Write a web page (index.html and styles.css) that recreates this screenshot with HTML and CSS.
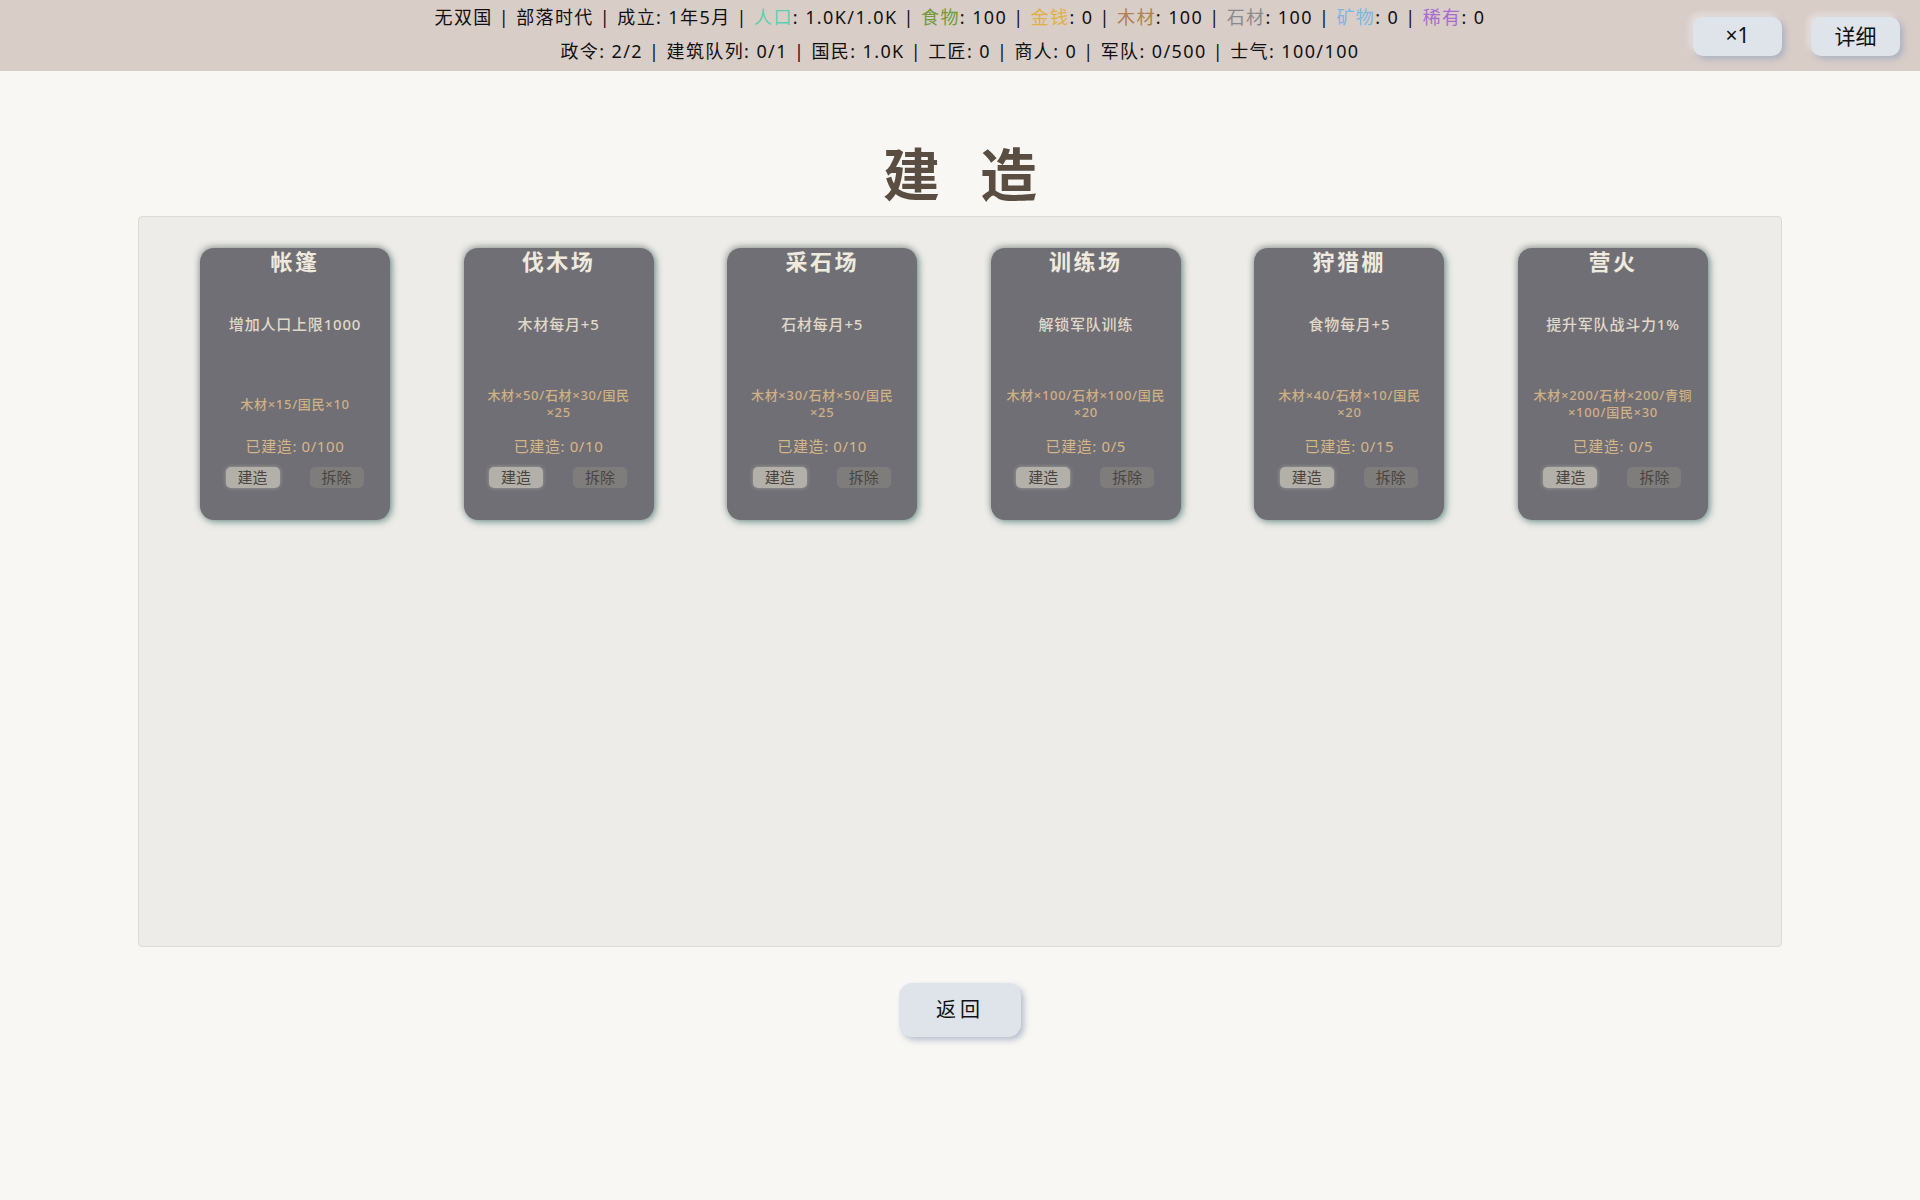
FILE: index.html
```html
<!DOCTYPE html>
<html lang="zh-CN">
<head>
    <meta charset="UTF-8">
    <title>建造</title>
    <link rel="stylesheet" href="styles.css">
</head>
<body>
    <div class="top-bar">
        <div class="status-line">无双国 | 部落时代 | 成立: 1年5月 | <span class="res-people">人口</span>: 1.0K/1.0K | <span class="res-food">食物</span>: 100 | <span class="res-gold">金钱</span>: 0 | <span class="res-wood">木材</span>: 100 | <span class="res-stone">石材</span>: 100 | <span class="res-ore">矿物</span>: 0 | <span class="res-rare">稀有</span>: 0</div>
        <div class="status-line">政令: 2/2 | 建筑队列: 0/1 | 国民: 1.0K | 工匠: 0 | 商人: 0 | 军队: 0/500 | 士气: 100/100</div>
        <div class="top-actions">
            <button class="soft-btn top-btn">×1</button>
            <button class="soft-btn top-btn">详细</button>
        </div>
    </div>

    <h1 class="page-title">建造</h1>

    <div class="build-panel">
        <div class="card">
            <div class="card-title">帐篷</div>
            <div class="card-desc">增加人口上限1000</div>
            <div class="card-cost">木材×15/国民×10</div>
            <div class="card-built">已建造: 0/100</div>
            <div class="card-actions">
                <button class="card-btn">建造</button>
                <button class="card-btn card-btn-off">拆除</button>
            </div>
        </div>
        <div class="card">
            <div class="card-title">伐木场</div>
            <div class="card-desc">木材每月+5</div>
            <div class="card-cost">木材×50/石材×30/国民×25</div>
            <div class="card-built">已建造: 0/10</div>
            <div class="card-actions">
                <button class="card-btn">建造</button>
                <button class="card-btn card-btn-off">拆除</button>
            </div>
        </div>
        <div class="card">
            <div class="card-title">采石场</div>
            <div class="card-desc">石材每月+5</div>
            <div class="card-cost">木材×30/石材×50/国民×25</div>
            <div class="card-built">已建造: 0/10</div>
            <div class="card-actions">
                <button class="card-btn">建造</button>
                <button class="card-btn card-btn-off">拆除</button>
            </div>
        </div>
        <div class="card">
            <div class="card-title">训练场</div>
            <div class="card-desc">解锁军队训练</div>
            <div class="card-cost">木材×100/石材×100/国民×20</div>
            <div class="card-built">已建造: 0/5</div>
            <div class="card-actions">
                <button class="card-btn">建造</button>
                <button class="card-btn card-btn-off">拆除</button>
            </div>
        </div>
        <div class="card">
            <div class="card-title">狩猎棚</div>
            <div class="card-desc">食物每月+5</div>
            <div class="card-cost">木材×40/石材×10/国民×20</div>
            <div class="card-built">已建造: 0/15</div>
            <div class="card-actions">
                <button class="card-btn">建造</button>
                <button class="card-btn card-btn-off">拆除</button>
            </div>
        </div>
        <div class="card">
            <div class="card-title">营火</div>
            <div class="card-desc">提升军队战斗力1%</div>
            <div class="card-cost">木材×200/石材×200/青铜×100/国民×30</div>
            <div class="card-built">已建造: 0/5</div>
            <div class="card-actions">
                <button class="card-btn">建造</button>
                <button class="card-btn card-btn-off">拆除</button>
            </div>
        </div>
    </div>

    <div class="footer">
        <button class="soft-btn back-btn">返回</button>
    </div>
</body>
</html>
```

FILE: styles.css
```css
body {
    margin: 0;
    min-height: 1200px;
    font-family: "Noto Sans", "Noto Sans CJK SC", sans-serif;
    background-color: #f8f7f3;
    color: #111;
}

button {
    font-family: inherit;
    border: none;
    padding: 0;
}

/* Top status bar */
.top-bar {
    position: relative;
    height: 71px;
    padding-top: 2px;
    box-sizing: border-box;
    background-color: #d9cdc8;
    text-align: center;
    font-size: 18px;
    letter-spacing: 1.4px;
}

.status-line {
    height: 33.5px;
    line-height: 31px;
}

.res-people { color: #5fcfb0; }
.res-food { color: #6f9a3a; }
.res-gold { color: #e0b040; }
.res-wood { color: #b08050; }
.res-stone { color: #8a8a8a; }
.res-ore { color: #7ab8e0; }
.res-rare { color: #a86ad0; }

.top-actions {
    position: absolute;
    top: 17px;
    right: 20px;
    display: flex;
    gap: 29px;
}

/* Soft raised buttons */
.soft-btn {
    background-color: #dfe3ea;
    color: #111;
    box-shadow: 3px 3px 6px rgba(150, 165, 190, 0.7), -3px -3px 6px rgba(255, 255, 255, 0.45);
}

.top-btn {
    width: 89px;
    height: 39px;
    padding-bottom: 3px;
    border-radius: 10px;
    font-size: 21px;
}

.page-title {
    margin: 0;
    height: 145px;
    box-sizing: border-box;
    padding: 58px 0 0 40px;
    text-align: center;
    font-size: 57px;
    line-height: 90px;
    font-weight: 700;
    letter-spacing: 40px;
    color: #5a4d41;
}

/* Panel with the building cards */
.build-panel {
    display: flex;
    align-items: flex-start;
    gap: 73.6px;
    width: 1644px;
    height: 731px;
    box-sizing: border-box;
    margin: 0 auto;
    padding: 31px 0 0 61px;
    background-color: #edece8;
    border: 1px solid #dcdbd6;
    border-radius: 4px;
}

.card {
    flex: none;
    display: flex;
    flex-direction: column;
    width: 190px;
    height: 272px;
    box-sizing: border-box;
    background-color: #6f6f75;
    border-radius: 14px;
    text-align: center;
    box-shadow: 2px 2px 7px rgba(80, 125, 120, 0.7), -1px -2px 6px rgba(90, 90, 90, 0.4);
}

.card-title {
    height: 26px;
    line-height: 26px;
    font-size: 22px;
    font-weight: 700;
    letter-spacing: 2.5px;
    color: #f0eade;
}

.card-desc {
    height: 100px;
    line-height: 100px;
    font-size: 15px;
    font-weight: 500;
    letter-spacing: 0.8px;
    color: #e0d8c8;
}

.card-cost {
    display: flex;
    align-items: center;
    justify-content: center;
    height: 60px;
    padding: 0 12px;
    font-size: 13px;
    font-weight: 500;
    line-height: 17px;
    letter-spacing: 0.7px;
    color: #d0b085;
}

.card-built {
    height: 24px;
    line-height: 24px;
    font-size: 15px;
    letter-spacing: 0.6px;
    color: #d6b688;
}

.card-actions {
    display: flex;
    justify-content: center;
    gap: 30px;
    margin-top: 9px;
    padding-right: 1px;
}

.card-btn {
    width: 54px;
    height: 21px;
    border-radius: 5px;
    background-color: #b2b0a8;
    color: #4a4540;
    font-size: 15px;
    line-height: 21px;
    box-shadow: 0 0 4px rgba(210, 210, 200, 0.5);
}

.card-btn-off {
    background-color: #7e7d7c;
    box-shadow: none;
}

.footer {
    display: flex;
    justify-content: center;
    padding-top: 36px;
}

.back-btn {
    width: 122px;
    height: 54px;
    padding-bottom: 3px;
    border-radius: 13px;
    font-size: 20px;
    letter-spacing: 4px;
}
```
